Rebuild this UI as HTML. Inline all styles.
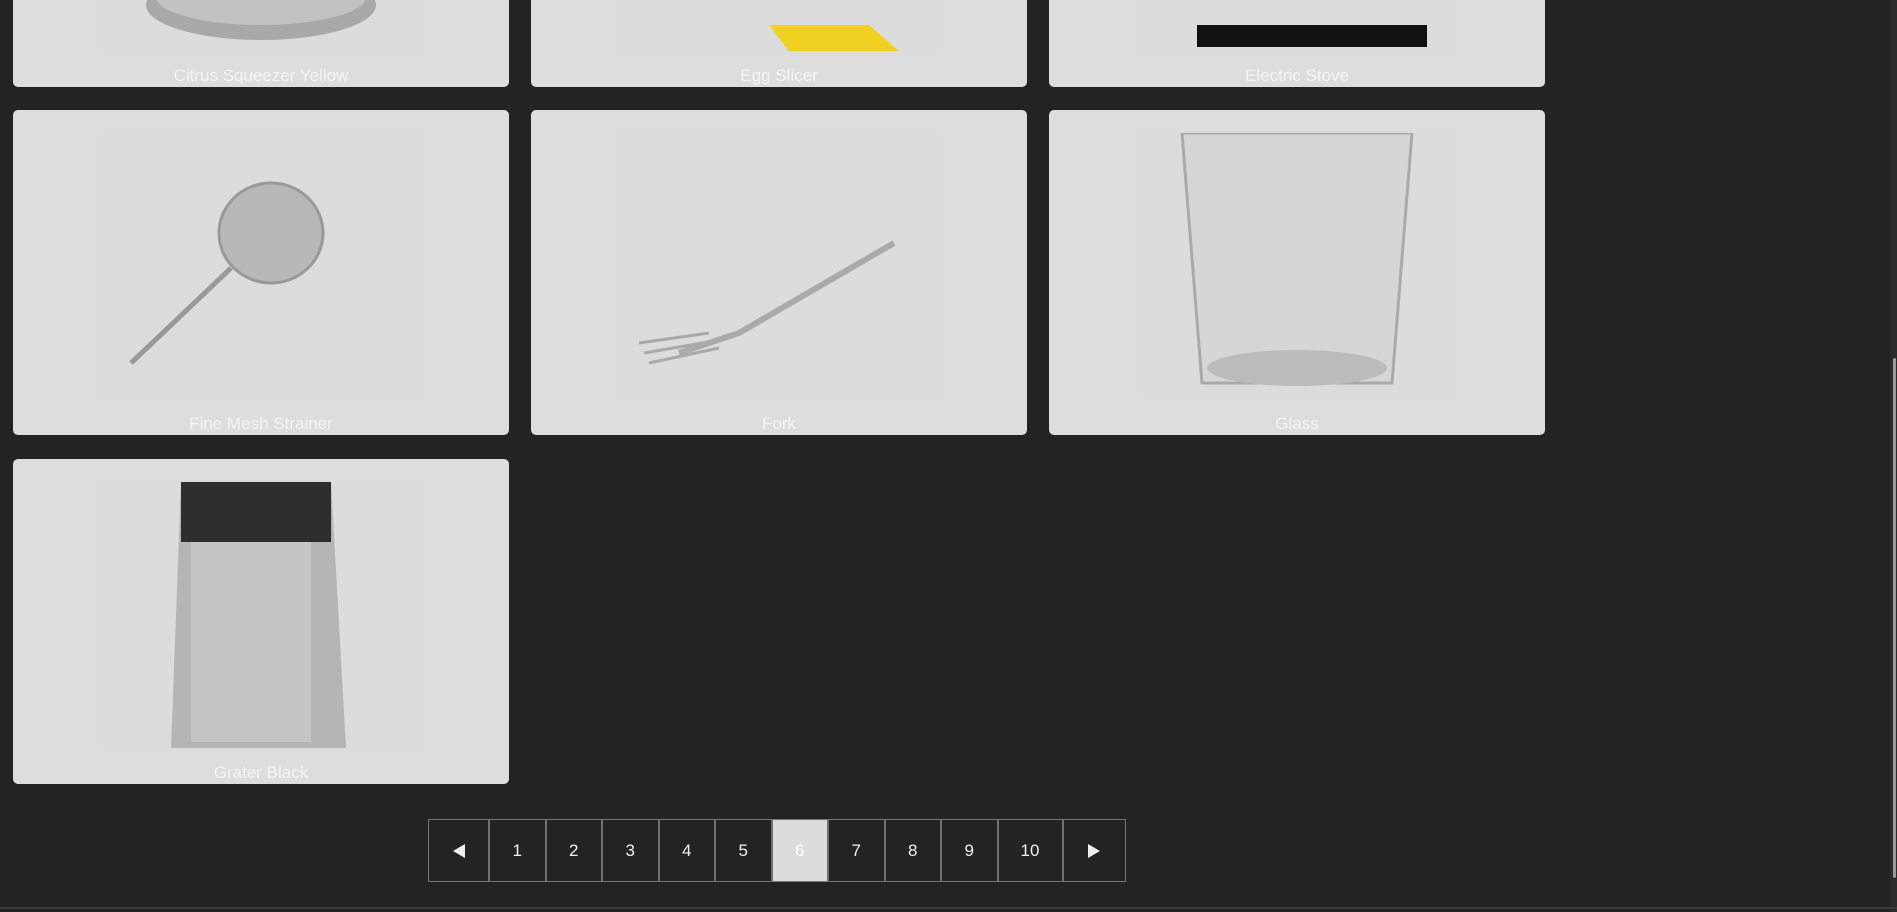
<!DOCTYPE html>
<html><head><meta charset="utf-8"><style>
*{box-sizing:border-box;margin:0;padding:0}
html,body{width:1897px;height:912px;overflow:hidden;background:#232323;font-family:"Liberation Sans",sans-serif}
.card{position:absolute;width:496px;height:325px;background:#dddddd;border-radius:5px;overflow:hidden}
.img{position:absolute;left:50%;transform:translateX(-50%);top:23px;width:320px;height:266px;background:#dcdcdc}
.lab{position:absolute;left:0;right:0;bottom:-1px;text-align:center;color:#f4f4f4;font-size:17px;line-height:24px}
.pg{position:absolute;left:428px;top:819px;height:63px;display:flex;border:1px solid #777}
.pg div{height:61px;border-right:2px solid #6f6f6f;color:#f0f0f0;font-size:17px;display:flex;align-items:center;justify-content:center;width:56.5px}
.pg div:last-child{border-right:none}
.pg .a{background:#dcdcdc;color:#fff}
.sb{position:absolute;right:0;top:0;width:7px;height:912px;background:#2b2b2b}
.th{position:absolute;right:1px;top:358px;width:3px;height:520px;background:#9a9a9a;border-radius:2px}
.bl{position:absolute;left:0;right:0;bottom:3px;height:2px;background:#3a3a3a}
</style></head><body>
<div class="card" style="left:13px;top:-238px"><div class="img"><svg width="320" height="266"><ellipse cx="160" cy="220" rx="115" ry="35" fill="#a9a9a7"/><ellipse cx="160" cy="212" rx="105" ry="28" fill="#c2c2c0"/></svg></div><div class="lab">Citrus Squeezer Yellow</div></div>
<div class="card" style="left:531px;top:-238px"><div class="img"><svg width="320" height="266"><path d="M150 240 L250 240 L280 266 L170 266Z" fill="#f0d020"/></svg></div><div class="lab">Egg Slicer</div></div>
<div class="card" style="left:1049px;top:-238px"><div class="img"><svg width="320" height="266"><rect x="60" y="240" width="230" height="22" fill="#111"/></svg></div><div class="lab">Electric Stove</div></div>

<div class="card" style="left:13px;top:110px"><div class="img"><svg width="320" height="266"><ellipse cx="170" cy="100" rx="52" ry="50" fill="#b8b8b8" stroke="#999" stroke-width="3"/><path d="M130 135 L30 230" stroke="#999" stroke-width="5" fill="none"/></svg></div><div class="lab">Fine Mesh Strainer</div></div>
<div class="card" style="left:531px;top:110px"><div class="img"><svg width="320" height="266"><path d="M60 220 L120 200 L275 110" stroke="#aaa" stroke-width="6" fill="none"/><path d="M20 210 L90 200 M25 220 L95 208 M30 230 L100 215" stroke="#aaa" stroke-width="3"/></svg></div><div class="lab">Fork</div></div>
<div class="card" style="left:1049px;top:110px"><div class="img" style="top:23px"><svg width="320" height="266"><path d="M45 0 L275 0 L255 250 L65 250Z" fill="#d6d6d6" stroke="#aaa" stroke-width="3"/><ellipse cx="160" cy="235" rx="90" ry="18" fill="#bbb"/></svg></div><div class="lab">Glass</div></div>

<div class="card" style="left:13px;top:459px"><div class="img"><svg width="320" height="266"><path d="M80 0 L230 0 L245 266 L70 266Z" fill="#b5b5b5"/><rect x="80" y="0" width="150" height="60" fill="#2e2e2e"/><rect x="90" y="60" width="120" height="200" fill="#c5c5c5"/></svg></div><div class="lab">Grater Black</div></div>

<div class="pg">
<div style="width:61px"><svg width="14" height="16"><path d="M13 1 L1 8 L13 15Z" fill="#eee"/></svg></div>
<div>1</div><div>2</div><div>3</div><div>4</div><div>5</div><div class="a">6</div><div>7</div><div>8</div><div>9</div><div style="width:65px">10</div>
<div style="width:61px"><svg width="14" height="16"><path d="M1 1 L13 8 L1 15Z" fill="#eee"/></svg></div>
</div>
<div class="sb"><div class="th"></div></div>
<div class="bl"></div>
</body></html>
